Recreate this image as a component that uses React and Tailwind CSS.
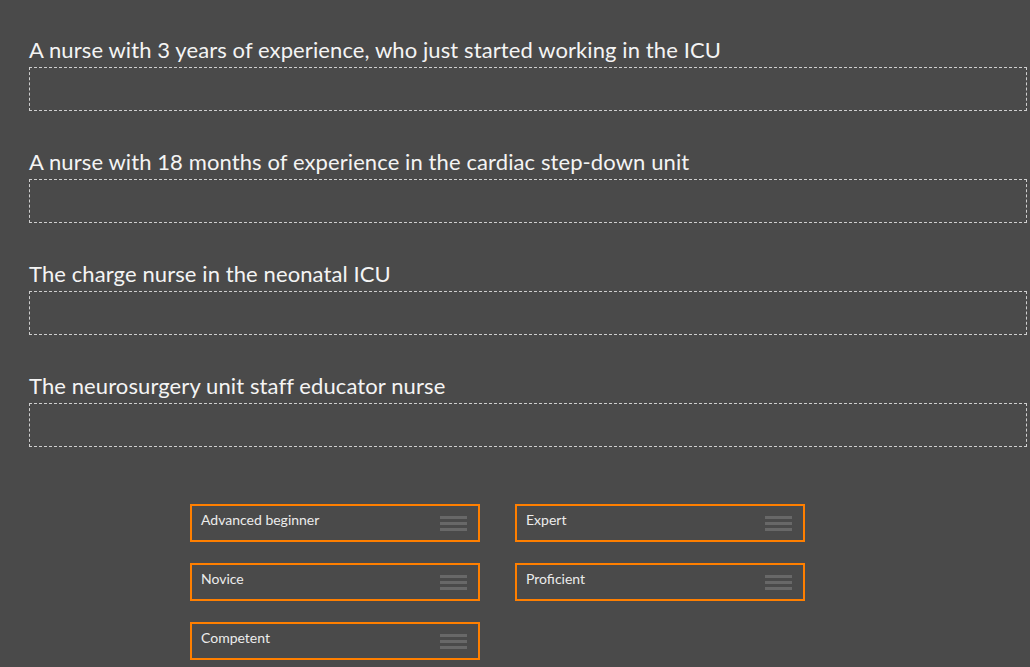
import React from "react";

const prompts = [
  "A nurse with 3 years of experience, who just started working in the ICU",
  "A nurse with 18 months of experience in the cardiac step-down unit",
  "The charge nurse in the neonatal ICU",
  "The neurosurgery unit staff educator nurse",
];

const options = [
  ["Advanced beginner", "Expert"],
  ["Novice", "Proficient"],
  ["Competent", null],
];

const Handle = () => (
  <div className="flex flex-col gap-[3px] w-[27px]">
    <span className="block h-[3px] bg-[#686868]" />
    <span className="block h-[3px] bg-[#686868]" />
    <span className="block h-[3px] bg-[#686868]" />
  </div>
);

const Chip = ({ label }) => (
  <div className="w-[290px] h-[38px] border-2 border-[#ff7f00] flex items-center justify-between pl-[9px] pr-[11px] cursor-move">
    <span className="text-[14px] text-[#ececec] leading-none -mt-[6px]">{label}</span>
    <Handle />
  </div>
);

export default function App() {
  return (
    <div className="min-h-screen h-[667px] overflow-hidden bg-[#4a4a4a] font-['Lato','Open_Sans',sans-serif] pl-[29px] pr-[3px] pt-[33px]">
      <div className="flex flex-col gap-[34px]">
        {prompts.map((p) => (
          <div key={p}>
            <h2 className="text-[22px] leading-[34px] text-[#f4f4f4] tracking-[0.1px]">{p}</h2>
            <div className="h-[44px] border border-dashed border-[#cfcfcf]" />
          </div>
        ))}
      </div>

      {/* Answer bank */}
      <div className="mt-[57px] ml-[161px] flex flex-col gap-[21px]">
        {options.map((row, i) => (
          <div key={i} className="flex gap-[35px]">
            {row.map((o) => (o ? <Chip key={o} label={o} /> : null))}
          </div>
        ))}
      </div>
    </div>
  );
}
